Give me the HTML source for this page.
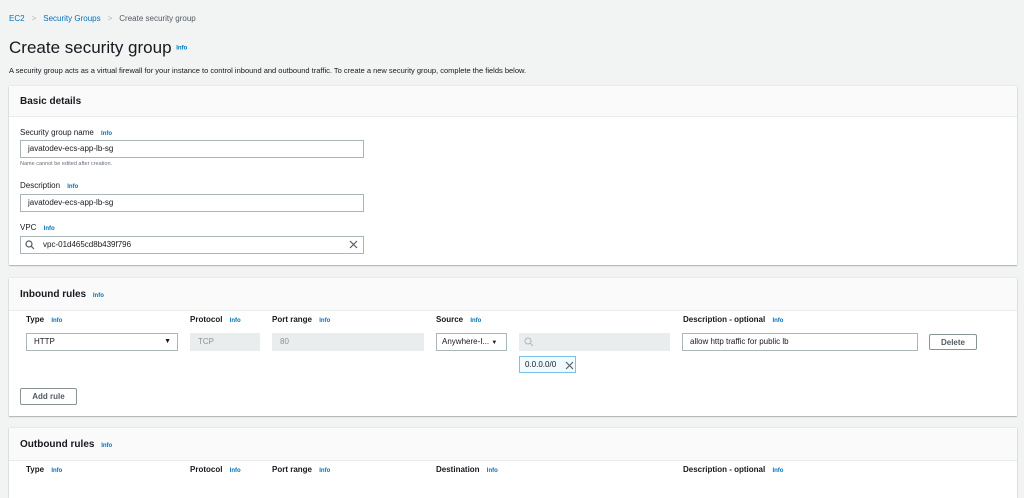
<!DOCTYPE html>
<html><head><style>
*{box-sizing:border-box;margin:0;padding:0}
body{width:1024px;height:485px;overflow:hidden;background:#f2f3f3;font-family:"Liberation Sans",sans-serif;color:#16191f;position:relative}
.a{position:absolute;white-space:nowrap}
.info{color:#0073bb;font-weight:bold;font-size:6px}
.panel{position:absolute;left:9px;width:1008px;background:#fff;box-shadow:0 1px 1px rgba(0,0,0,.25),0 0 1px rgba(0,0,0,.2)}
.ph{position:absolute;left:0;top:0;width:100%;background:#fafafa;border-bottom:1px solid #eaeded}
.h{font-weight:bold;font-size:10px}
.lbl{font-size:8px;color:#16191f}
.bl{font-weight:bold;font-size:8px}
.inp{position:absolute;border:1px solid #aab7b8;background:#fff;font-size:8px;padding-left:7px;line-height:16px;height:18px}
.dis{background:#eaeded;border-color:#eaeded;color:#879596}
.btn{position:absolute;border:1px solid #545b64;background:#fff;font-size:8px;font-weight:bold;color:#545b64;text-align:center;line-height:15px;border-radius:2px}
</style></head><body>
<div class="a" style="left:9px;top:14px;font-size:8px"><span style="color:#0073bb">EC2</span><span style="color:#aab7b8;margin:0 7px">&gt;</span><span style="color:#0073bb">Security Groups</span><span style="color:#aab7b8;margin:0 7px">&gt;</span><span style="color:#545b64">Create security group</span></div>
<div class="a" style="left:9px;top:38px;font-size:17px">Create security group <span class="info" style="vertical-align:middle">Info</span></div>
<div class="a" style="left:9px;top:66px;font-size:7.5px;color:#16191f">A security group acts as a virtual firewall for your instance to control inbound and outbound traffic. To create a new security group, complete the fields below.</div>

<div class="panel" style="top:86px;height:179px">
<div class="ph" style="height:31px"></div>
<div class="a h" style="left:11px;top:10px">Basic details</div>
<div class="a lbl" style="left:11px;top:42px">Security group name <span class="info" style="margin-left:5px">Info</span></div>
<div class="inp" style="left:11px;top:54px;width:344px">javatodev-ecs-app-lb-sg</div>
<div class="a" style="left:11px;top:75px;font-size:5.5px;color:#687078">Name cannot be edited after creation.</div>
<div class="a lbl" style="left:11px;top:95px">Description <span class="info" style="margin-left:5px">Info</span></div>
<div class="inp" style="left:11px;top:108px;width:344px">javatodev-ecs-app-lb-sg</div>
<div class="a lbl" style="left:11px;top:137px">VPC <span class="info" style="margin-left:5px">Info</span></div>
<div class="inp" style="left:11px;top:150px;width:344px;padding-left:22px">vpc-01d465cd8b439f796</div>
<svg class="a" style="left:16px;top:154px" width="10" height="10"><circle cx="4" cy="4" r="3" fill="none" stroke="#545b64" stroke-width="1.2"/><path d="M6.3 6.3L9 9" stroke="#545b64" stroke-width="1.2"/></svg>
<svg class="a" style="left:340px;top:154px" width="10" height="10"><path d="M1 1L8 8M8 1L1 8" stroke="#545b64" stroke-width="1.2"/></svg>
</div>

<div class="panel" style="top:278px;height:138px">
<div class="ph" style="height:33px"></div>
<div class="a h" style="left:11px;top:11px">Inbound rules <span class="info" style="margin-left:4px">Info</span></div>
<div class="a bl" style="left:17px;top:37px">Type <span class="info" style="margin-left:5px">Info</span></div>
<div class="a bl" style="left:181px;top:37px">Protocol <span class="info" style="margin-left:5px">Info</span></div>
<div class="a bl" style="left:263px;top:37px">Port range <span class="info" style="margin-left:5px">Info</span></div>
<div class="a bl" style="left:427px;top:37px">Source <span class="info" style="margin-left:5px">Info</span></div>
<div class="a bl" style="left:674px;top:37px">Description - optional <span class="info" style="margin-left:5px">Info</span></div>
<div class="inp" style="left:17px;top:55px;width:152px">HTTP<span style="position:absolute;right:6px;font-size:7px">▼</span></div>
<div class="inp dis" style="left:181px;top:55px;width:70px">TCP</div>
<div class="inp dis" style="left:263px;top:55px;width:152px">80</div>
<div class="inp" style="left:427px;top:55px;width:71px;padding-left:5px">Anywhere-I... <span style="font-size:6px">▼</span></div>
<div class="inp dis" style="left:510px;top:55px;width:151px"></div>
<svg class="a" style="left:515px;top:59px" width="10" height="10"><circle cx="4" cy="4" r="3" fill="none" stroke="#aab7b8" stroke-width="1"/><path d="M6.3 6.3L9 9" stroke="#aab7b8" stroke-width="1"/></svg>
<div class="inp" style="left:673px;top:55px;width:236px">allow http traffic for public lb</div>
<div class="btn" style="left:920px;top:56px;width:48px;height:16px;border-color:#879596">Delete</div>
<div class="a" style="left:510px;top:78px;width:57px;height:17px;border:1px solid #79c1e8;background:#f1faff;font-size:8px;line-height:15px;padding-left:5px">0.0.0.0/0
<svg style="position:absolute;left:45px;top:4px" width="9" height="9"><path d="M1 1L8 8M8 1L1 8" stroke="#545b64" stroke-width="1.1"/></svg></div>
<div class="btn" style="left:11px;top:110px;width:57px;height:17px;border-color:#879596">Add rule</div>
</div>

<div class="panel" style="top:428px;height:70px">
<div class="ph" style="height:33px"></div>
<div class="a h" style="left:11px;top:11px">Outbound rules <span class="info" style="margin-left:4px">Info</span></div>
<div class="a bl" style="left:17px;top:37px">Type <span class="info" style="margin-left:5px">Info</span></div>
<div class="a bl" style="left:181px;top:37px">Protocol <span class="info" style="margin-left:5px">Info</span></div>
<div class="a bl" style="left:263px;top:37px">Port range <span class="info" style="margin-left:5px">Info</span></div>
<div class="a bl" style="left:427px;top:37px">Destination <span class="info" style="margin-left:5px">Info</span></div>
<div class="a bl" style="left:674px;top:37px">Description - optional <span class="info" style="margin-left:5px">Info</span></div>
</div>
</body></html>
